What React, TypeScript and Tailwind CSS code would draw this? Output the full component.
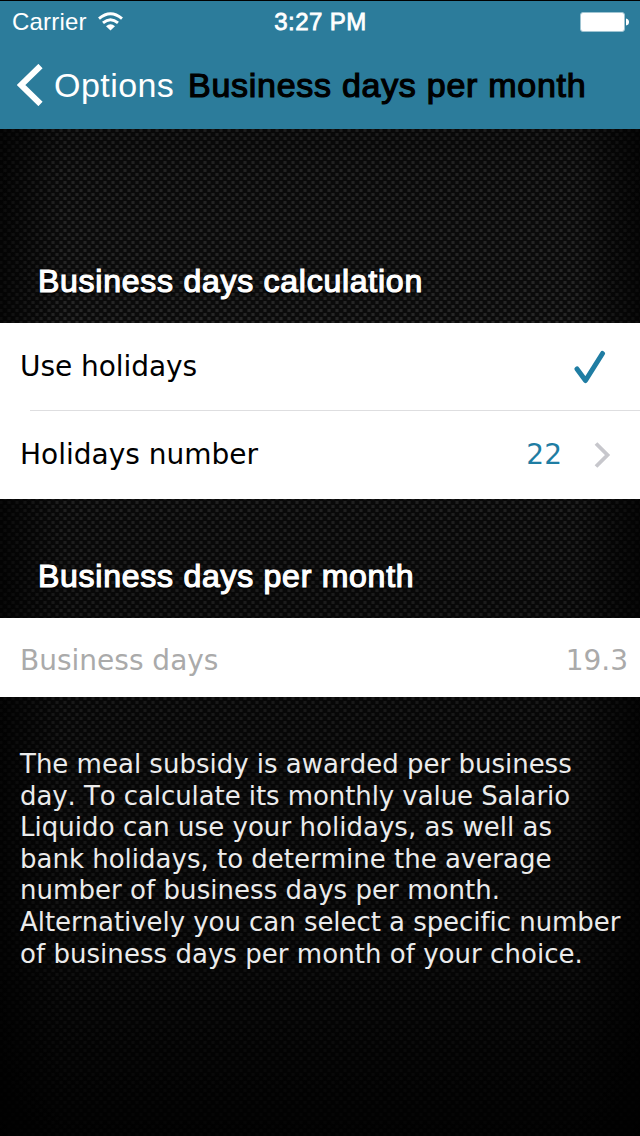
const heading =
  "font-['Liberation_Sans'] text-white whitespace-nowrap tracking-[0.74px] [-webkit-text-stroke:1.2px_white] [text-shadow:0_2px_2px_#000]";

const paragraph = [
  { text: "The meal subsidy is awarded per business", tracking: "tracking-normal" },
  { text: "day. To calculate its monthly value Salario", tracking: "tracking-[-0.08px]" },
  { text: "Liquido can use your holidays, as well as", tracking: "tracking-[0.04px]" },
  { text: "bank holidays, to determine the average", tracking: "tracking-normal" },
  { text: "number of business days per month.", tracking: "tracking-[0.05px]" },
  { text: "Alternatively you can select a specific number", tracking: "tracking-[-0.05px]" },
  { text: "of business days per month of your choice.", tracking: "tracking-[0.04px]" },
];

function Weave() {
  return (
    <svg className="absolute inset-0 h-full w-full" aria-hidden="true">
      <defs>
        <pattern id="weave" width="8" height="8" patternUnits="userSpaceOnUse">
          <rect width="8" height="8" fill="#0c0c0c" />
          <rect x="3" y="1" width="4" height="3" fill="#1c1c1c" />
          <rect x="4" y="1" width="2" height="3" fill="#292929" />
          <rect x="0" y="5" width="3" height="3" fill="#1c1c1c" />
          <rect x="7" y="5" width="1" height="3" fill="#1c1c1c" />
          <rect x="0" y="5" width="2" height="3" fill="#292929" />
        </pattern>
        <linearGradient id="sides">
          <stop offset="0" stopColor="#000" stopOpacity="0.7" />
          <stop offset="0.1" stopColor="#000" stopOpacity="0" />
          <stop offset="0.9" stopColor="#000" stopOpacity="0" />
          <stop offset="1" stopColor="#000" stopOpacity="0.7" />
        </linearGradient>
        <linearGradient id="fall" x1="0" y1="0" x2="0" y2="1">
          <stop offset="0" stopColor="#000" stopOpacity="0.8" />
          <stop offset="0.15" stopColor="#000" stopOpacity="0.15" />
          <stop offset="0.3" stopColor="#000" stopOpacity="0.05" />
          <stop offset="0.55" stopColor="#000" stopOpacity="0.35" />
          <stop offset="0.8" stopColor="#000" stopOpacity="0.5" />
          <stop offset="1" stopColor="#000" stopOpacity="0.9" />
        </linearGradient>
      </defs>
      <rect width="100%" height="100%" fill="url(#weave)" />
      <rect width="100%" height="100%" fill="url(#sides)" />
      <rect width="100%" height="100%" fill="url(#fall)" />
    </svg>
  );
}

export default function App() {
  return (
    <div className="relative h-[1136px] w-[640px] overflow-hidden bg-black font-['DejaVu_Sans',sans-serif]">
      <Weave />
      <div className="relative flex flex-col">
        <header className="h-[129px] border-t border-black bg-[#2c7c9b] font-['Liberation_Sans',sans-serif]">
          <div className="grid h-[42px] grid-cols-3 items-center pl-3 pr-[11px] text-white">
            <div className="flex items-center gap-[11px]">
              <span className="text-[24px] tracking-[0.2px]">Carrier</span>
              <svg className="-mt-[2px]" width="25" height="19" viewBox="0 0 25 19" fill="none" stroke="#fff" strokeWidth="2.9">
                <path d="M1 6.6Q12.5-3.2 24 6.6" />
                <path d="M5 10.9Q12.5 4.4 20 10.9" />
                <path d="M8 14.2Q12.5 10.2 17 14.2L12.5 18.6Z" fill="#fff" stroke="none" />
              </svg>
            </div>
            <span className="text-center text-[24px] tracking-[0.45px] whitespace-nowrap [-webkit-text-stroke:0.8px_white]">3:27 PM</span>
            <svg className="justify-self-end" width="49" height="20" viewBox="0 0 49 20">
              <rect x="0.5" y="0.5" width="44" height="19" rx="2.5" fill="#fff" stroke="#9fc4d2" />
              <path d="M46 6.5Q49 7 49 10T46 13.5Z" fill="#fff" />
            </svg>
          </div>
          <div className="flex h-[84px] items-center pl-[17px]">
            <svg width="26" height="42" viewBox="0 0 26 42" fill="none" stroke="#fff" strokeWidth="6">
              <path d="M23.5 2L4 21L23.5 40" />
            </svg>
            <span className="ml-[11px] w-[120px] text-[34px] tracking-[0.45px] whitespace-nowrap text-white">Options</span>
            <span className="ml-[14px] text-[34px] tracking-[0.72px] whitespace-nowrap text-black [-webkit-text-stroke:1.2px_black]">Business days per month</span>
          </div>
        </header>

        <div className="flex h-[194px] items-end pb-[23px] pl-[38px]">
          <h2 className={`${heading} text-[32px] leading-[38px]`}>Business days calculation</h2>
        </div>

        <section className="h-[176px] bg-white text-[28px] text-black">
          <div className="flex h-[88px] items-center justify-between pl-[20px] pr-[34px]">
            <span className="tracking-[-0.05px]">Use holidays</span>
            <svg width="32" height="34" viewBox="0 0 32 34" fill="none" stroke="#1f7da3" strokeWidth="5" strokeLinecap="round" strokeLinejoin="round">
              <path d="M3 19L11.5 30.5L28.5 3.5" />
            </svg>
          </div>
          <div className="ml-[30px] -mt-px h-px bg-[#dedee0]" />
          <div className="flex h-[88px] items-center pl-[20px] pr-[29px]">
            <span>Holidays number</span>
            <span className="ml-auto text-[#1f7da3]">22</span>
            <svg className="ml-[32px]" width="17" height="26" viewBox="0 0 17 26" fill="none" stroke="#c7c7cc" strokeWidth="3.8">
              <path d="M2 1.5L13.5 13L2 24.5" />
            </svg>
          </div>
        </section>

        <div className="flex h-[119px] items-end pb-[23px] pl-[38px]">
          <h2 className={`${heading} text-[32px] leading-[38px]`}>Business days per month</h2>
        </div>

        <section className="flex h-[79px] items-center justify-between bg-white pt-[7px] pl-[20px] pr-[12px] text-[28px] text-[#aaa]">
          <span>Business days</span>
          <span>19.3</span>
        </section>

        <p className="pt-[52px] pl-[20px] text-[26px] leading-[31.6px] text-[#ebebeb] [font-kerning:none] [font-variant-ligatures:none]">
          {paragraph.map(({ text, tracking }) => (
            <span key={text} className={`block whitespace-nowrap ${tracking}`}>{text}</span>
          ))}
        </p>
      </div>
    </div>
  );
}
